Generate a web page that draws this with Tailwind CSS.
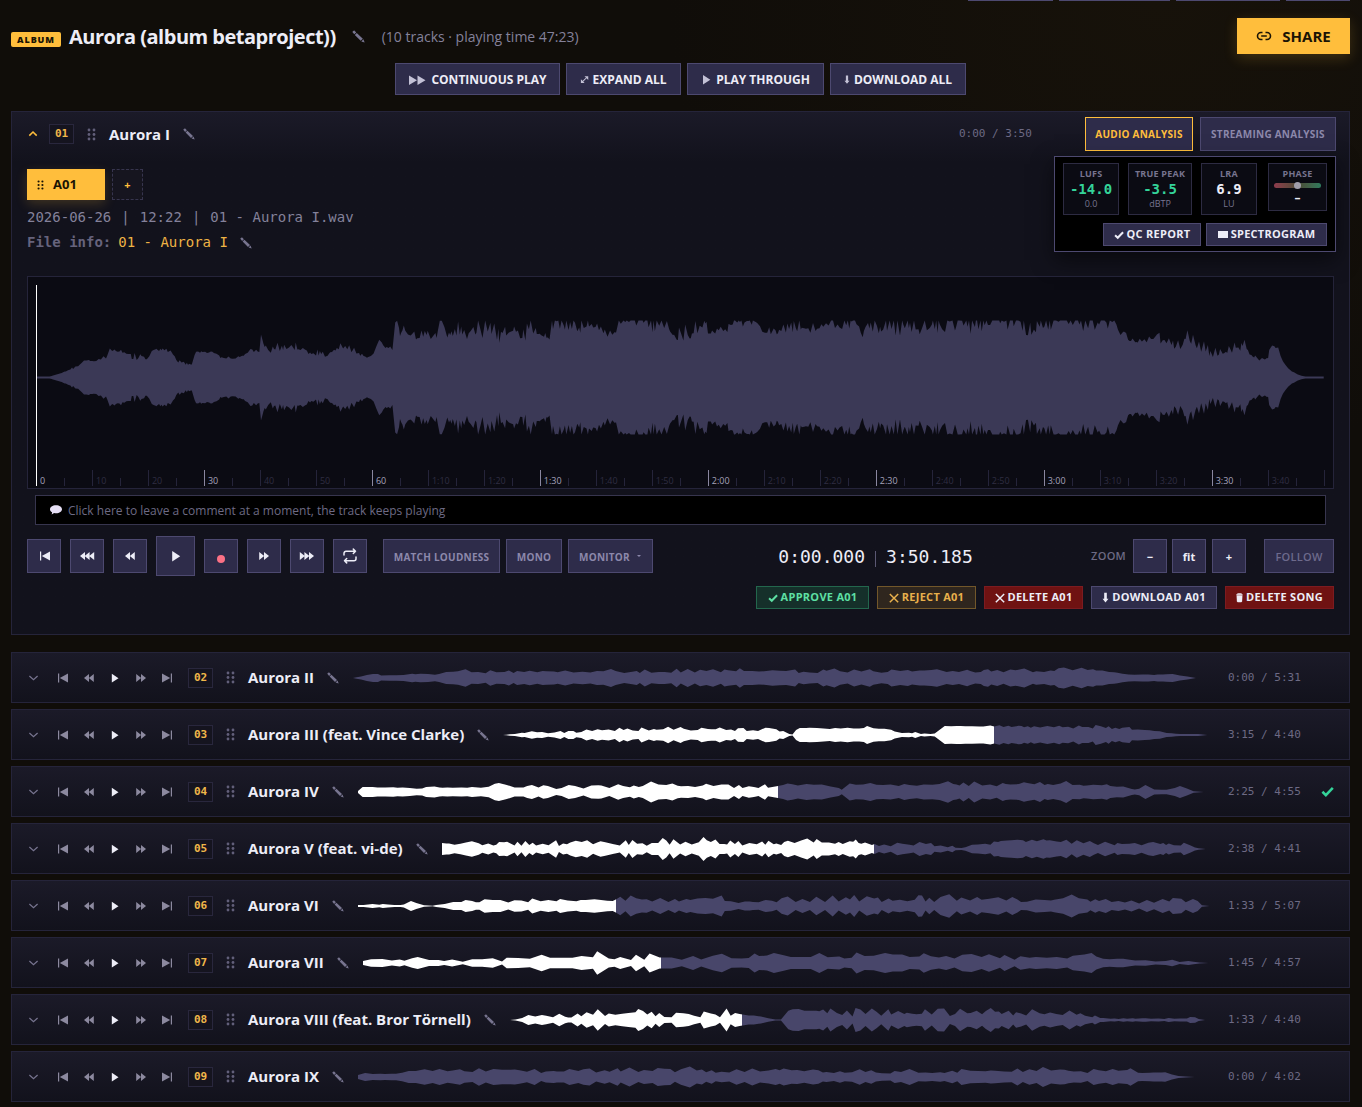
<!DOCTYPE html>
<html lang="en">
<head>
    <meta charset="UTF-8">
    <meta name="viewport" content="width=device-width, initial-scale=1.0">
    <title>Aurora (album betaproject))</title>
    <script src="https://cdn.jsdelivr.net/npm/@tailwindcss/browser@4"></script>
</head>
<body class="min-h-screen bg-[#100d09] bg-[radial-gradient(ellipse_at_85%_0%,#17120a_0%,#100d09_30%)] font-['Open_Sans','Noto_Sans',sans-serif] text-[#ededf7]">

    <!-- Icon sprite -->
    <svg class="hidden" aria-hidden="true">
        <symbol id="i-pencil" viewBox="0 0 12 12">
            <path fill="currentColor" d="M.3 1.8Q1 .3 2.200.4L3.900 2.200 2.100 4zM2.600 4.500 4.400 2.700 10 8 8 10zM10.500 8.600 11.700 11.600 8.600 10.500z" />
        </symbol>
        <symbol id="i-dots" viewBox="0 0 9 13">
            <g fill="currentColor">
                <circle cx="2" cy="2" r="1.400" /><circle cx="7" cy="2" r="1.400" />
                <circle cx="2" cy="6.500" r="1.400" /><circle cx="7" cy="6.500" r="1.400" />
                <circle cx="2" cy="11" r="1.400" /><circle cx="7" cy="11" r="1.400" />
            </g>
        </symbol>
        <symbol id="i-up" viewBox="0 0 12 12">
            <path fill="none" stroke="currentColor" stroke-width="1.500" d="M2.300 7.600 6 4 9.700 7.600" />
        </symbol>
        <symbol id="i-down" viewBox="0 0 12 12">
            <path fill="none" stroke="currentColor" stroke-width="1.200" d="M2.400 4 6.500 7.800 10.600 4" />
        </symbol>
        <symbol id="i-start" viewBox="0 0 12 12">
            <path fill="currentColor" d="M1 1.500h1.200v9H1zM11 1.500v9L2.800 6z" />
        </symbol>
        <symbol id="i-end" viewBox="0 0 12 12">
            <path fill="currentColor" d="M9.800 1.500H11v9H9.800zM1 1.500v9L9.200 6z" />
        </symbol>
        <symbol id="i-rew" viewBox="0 0 12 12">
            <path fill="currentColor" d="M6 2v8L1 6zM10.800 2v8l-5-4z" />
        </symbol>
        <symbol id="i-fwd" viewBox="0 0 12 12">
            <path fill="currentColor" d="M1.200 2v8l5-4zM6 2v8l5-4z" />
        </symbol>
        <symbol id="i-rew3" viewBox="0 0 16 12">
            <path fill="currentColor" d="M6 2v8L1 6zM10.600 2v8l-5-4zM15.200 2v8l-5-4z" />
        </symbol>
        <symbol id="i-fwd3" viewBox="0 0 16 12">
            <path fill="currentColor" d="M.8 2v8l5-4zM5.400 2v8l5-4zM10 2v8l5-4z" />
        </symbol>
        <symbol id="i-play" viewBox="0 0 12 12">
            <path fill="currentColor" d="M2.200 1v10.400l8-5.200z" />
        </symbol>
        <symbol id="i-play2" viewBox="0 0 18 12">
            <path fill="currentColor" d="M1 1.500v9.500l8-4.700zM9.500 1.500v9.500l8-4.700z" />
        </symbol>
        <symbol id="i-expand" viewBox="0 0 12 12">
            <path fill="none" stroke="currentColor" stroke-width="1.400" d="M3 9.300 9.300 3" />
            <path fill="currentColor" d="M6 1.800h5v5zM1.200 5.800v5h5z" />
        </symbol>
        <symbol id="i-arrow" viewBox="0 0 8 12">
            <path fill="currentColor" d="M2.500.6h3V7.500h1.900L4 11.600.6 7.500h1.900z" />
        </symbol>
        <symbol id="i-check" viewBox="0 0 12 12">
            <path fill="none" stroke="currentColor" stroke-width="2.400" d="M1.300 6.200 4.500 9.300 10.900 2.700" />
        </symbol>
        <symbol id="i-cross" viewBox="0 0 12 12">
            <path fill="none" stroke="currentColor" stroke-width="1.800" d="M1 1.200l10 10M11 1.200l-10 10" />
        </symbol>
        <symbol id="i-trash" viewBox="0 0 8 12">
            <path fill="currentColor" d="M.6 2.500C.6.6 7.400.6 7.400 2.500L7 10.500C6.900 11.800 1.100 11.800 1 10.500z" />
            <path fill="none" stroke="#6f1212" stroke-width=".5" d="M1 3.300h6" />
        </symbol>
        <symbol id="i-link" viewBox="0 0 16 10">
            <path fill="none" stroke="currentColor" stroke-width="1.600" d="M6.500 1.500H5a3.300 3.300 0 0 0 0 7h1.500M9.500 1.500H11a3.300 3.300 0 0 1 0 7H9.500M5.200 5h5.600" />
        </symbol>
        <symbol id="i-loop" viewBox="0 0 16 16">
            <path fill="none" stroke="currentColor" stroke-width="1.500" stroke-linecap="round" stroke-linejoin="round" d="M2 7V5.300a2 2 0 0 1 2-2h9.500M11.300 1.100l2.200 2.200-2.200 2.200M14 9v1.700a2 2 0 0 1-2 2H2.500M4.700 10.500l-2.200 2.200 2.200 2.200" />
        </symbol>
        <symbol id="i-bubble" viewBox="0 0 14 12">
            <path fill="currentColor" d="M7 1.200c3.600 0 6 1.700 6 4S10.600 9.200 7 9.200c-.7 0-1.300 0-1.900-.2L2.700 10.600l.4-2.300C1.700 7.500 1 6.400 1 5.200c0-2.300 2.400-4 6-4z" />
        </symbol>
    </svg>

    <div class="pr-3 pl-[11px]">
        <!-- Toolbar, scrolled almost out of view -->
        <div class="flex h-px justify-end gap-[6px]">
            <div class="w-[85px] bg-[#4d4970]"></div>
            <div class="w-[111px] bg-[#4d4970]"></div>
            <div class="w-[104px] bg-[#4d4970]"></div>
            <div class="w-[64px] bg-[#4d4970]"></div>
        </div>

        <header class="mt-[17px] flex h-9 items-center">
            <span class="mt-[7px] flex h-[15px] w-[50px] items-center justify-center rounded-xs bg-[#ffbe3c] text-[9px] font-extrabold tracking-widest text-[#1a1405]">ALBUM</span>
            <h1 class="mt-[2px] ml-2 text-xl font-bold tracking-tight whitespace-nowrap">Aurora (album betaproject))</h1>
            <button type="button" aria-label="Rename album" class="ml-4 text-[#77748f]"><svg class="size-[13px]"><use href="#i-pencil" /></svg></button>
            <span class="mt-[2px] ml-[17px] text-sm text-[#84819a]">(10 tracks · playing time 47:23)</span>
            <button type="button" class="ml-auto flex h-9 w-[113px] items-center justify-center gap-[10px] bg-[#ffbe3c] text-[15px] font-bold text-[#1a1405] shadow-[0_4px_14px_#ffbe3c30]">
                <svg class="h-[10px] w-4"><use href="#i-link" /></svg>SHARE
            </button>
        </header>

        <div class="mt-[9px] flex justify-center gap-[6px] text-xs font-bold">
            <button type="button" class="flex h-8 w-[165px] items-center justify-center gap-[5px] border border-[#4d4970] bg-[#2e2c4a] pt-px"><svg class="h-3 w-[18px] text-[#c3c1d6]"><use href="#i-play2" /></svg>CONTINUOUS PLAY</button>
            <button type="button" class="flex h-8 w-[115px] items-center justify-center gap-[3px] border border-[#4d4970] bg-[#2e2c4a] pt-px"><svg class="size-[9px] text-[#c3c1d6]"><use href="#i-expand" /></svg>EXPAND ALL</button>
            <button type="button" class="flex h-8 w-[137px] items-center justify-center gap-1 border border-[#4d4970] bg-[#2e2c4a] pt-px"><svg class="size-[11px] text-[#c3c1d6]"><use href="#i-play" /></svg>PLAY THROUGH</button>
            <button type="button" class="flex h-8 w-[136px] items-center justify-center gap-1 border border-[#4d4970] bg-[#2e2c4a] pt-px"><svg class="h-[9px] w-[6px] text-[#c3c1d6]"><use href="#i-arrow" /></svg>DOWNLOAD ALL</button>
        </div>

        <!-- Open track -->
        <section class="mt-4 border border-[#25243a] bg-[#12121c] bg-linear-to-b from-[#1b1a28] to-[#12121c] to-[50px] px-[15px] pb-[25px]">
            <div class="relative flex h-11 items-center">
                <button type="button" aria-label="Collapse" class="text-[#ffbe3c]"><svg class="size-3"><use href="#i-up" /></svg></button>
                <span class="ml-[10px] flex h-5 w-[25px] items-center justify-center border border-[#29273d] bg-[#15141f] pt-px font-['DejaVu_Sans_Mono',monospace] text-[11px] font-bold text-[#f0b74a]">01</span>
                <svg class="ml-[13px] h-[13px] w-[9px] text-[#625f7a]"><use href="#i-dots" /></svg>
                <h2 class="ml-[13px] text-[15px] font-bold">Aurora I</h2>
                <button type="button" aria-label="Rename track" class="ml-[13px] text-[#77748f]"><svg class="size-3"><use href="#i-pencil" /></svg></button>
                <span class="mt-px ml-auto w-[76px] font-['DejaVu_Sans_Mono',monospace] text-[11px] text-[#6d6a84]">0:00 / 3:50</span>
                <div class="-mr-[2px] ml-[50px] flex gap-[7px] text-[10px] font-bold tracking-wide">
                    <button type="button" class="h-[34px] w-[108px] border border-[#ffbe3c] bg-[#2e2c4a] text-[#ffbe3c]">AUDIO ANALYSIS</button>
                    <button type="button" class="h-[34px] w-[136px] border border-[#4d4970] bg-[#2e2c4a] text-[#8c88ab]">STREAMING ANALYSIS</button>
                </div>

                <!-- Analysis popover -->
                <div class="absolute top-11 -right-[2px] h-24 w-[282px] border border-[#4d4970] bg-black px-2 pt-[6px] shadow-[0_8px_20px_#00000080]">
                    <div class="flex items-start justify-between text-center text-[9px] leading-[14px] text-[#77748f]">
                        <div class="h-[52px] w-14 border border-[#2d2b42] bg-[#0b0b13] pt-[3px]">
                            <div class="font-bold tracking-wide">LUFS</div>
                            <div class="font-['DejaVu_Sans_Mono',monospace] text-sm leading-4 font-bold text-[#34d399]">-14.0</div>
                            <div>0.0</div>
                        </div>
                        <div class="h-[52px] w-16 border border-[#2d2b42] bg-[#0b0b13] pt-[3px] whitespace-nowrap">
                            <div class="font-bold tracking-wide">TRUE PEAK</div>
                            <div class="font-['DejaVu_Sans_Mono',monospace] text-sm leading-4 font-bold text-[#34d399]">-3.5</div>
                            <div>dBTP</div>
                        </div>
                        <div class="h-[52px] w-14 border border-[#2d2b42] bg-[#0b0b13] pt-[3px]">
                            <div class="font-bold tracking-wide">LRA</div>
                            <div class="font-['DejaVu_Sans_Mono',monospace] text-sm leading-4 font-bold text-[#ededf7]">6.9</div>
                            <div>LU</div>
                        </div>
                        <div class="ml-[2px] h-12 w-[59px] border border-[#2d2b42] bg-[#0b0b13] px-[5px] pt-[3px]">
                            <div class="font-bold tracking-wide">PHASE</div>
                            <div class="mt-[2px] flex h-[5px] items-center justify-center rounded-full bg-linear-to-r from-[#8f3b4d] via-[#4a4a35] to-[#2c7a5c]">
                                <span class="size-[7px] rounded-full bg-[#a09eab]"></span>
                            </div>
                            <div class="mt-[3px] text-xs leading-[14px] font-bold text-[#ededf7]">–</div>
                        </div>
                    </div>
                    <div class="mt-2 flex justify-end gap-[5px] text-[11px] font-bold tracking-wide">
                        <button type="button" class="flex h-[23px] w-[98px] items-center justify-center gap-[3px] border border-[#4d4970] bg-[#2e2c4a]"><svg class="size-[10px]"><use href="#i-check" /></svg>QC REPORT</button>
                        <button type="button" class="flex h-[23px] w-[121px] items-center justify-center gap-[3px] border border-[#4d4970] bg-[#2e2c4a]"><span class="h-[7px] w-[10px] bg-[#ededf7]"></span>SPECTROGRAM</button>
                    </div>
                </div>
            </div>

            <div class="mt-[13px] flex gap-[7px]">
                <button type="button" class="flex h-[31px] w-[78px] items-center gap-[9px] bg-[#ffbe3c] pl-[10px] text-[13px] font-bold text-[#1a1405] shadow-[0_4px_12px_#ffbe3c30]"><svg class="h-[10px] w-[7px]"><use href="#i-dots" /></svg>A01</button>
                <button type="button" class="h-[31px] w-[31px] border border-dashed border-[#37354e] bg-[#16151f] pt-[2px] text-[11px] font-bold text-[#ffbe3c]">+</button>
            </div>

            <div class="mt-[5px] font-['DejaVu_Sans_Mono',monospace] text-sm leading-[25px] text-[#84819a]">
                <p class="flex gap-[10px]"><span>2026-06-26</span><span>|</span><span>12:22</span><span>|</span><span>01 - Aurora I.wav</span></p>
                <p class="flex items-center gap-[7px]"><b class="text-[#66637c]">File info:</b><span class="text-[#eeb345]">01 - Aurora I</span>
                    <button type="button" aria-label="Rename file" class="ml-[5px] text-[#77748f]"><svg class="size-3"><use href="#i-pencil" /></svg></button>
                </p>
            </div>

            <div class="mt-[21px] border border-[#25243a] bg-[#0b0b13] px-2 pt-2 pb-[2px]">
                <div class="border-l border-white">
                    <svg id="main-wave" class="block h-[185px] w-full" preserveAspectRatio="none"></svg>
                    <div id="ruler" class="-ml-px flex h-4 text-[9px] leading-4"></div>
                </div>
            </div>

            <label class="mx-2 mt-[6px] flex h-[30px] items-center gap-[5px] border border-[#37354e] bg-black pl-[13px]">
                <svg class="h-3 w-[14px] text-[#e6dff5]"><use href="#i-bubble" /></svg>
                <input type="text" aria-label="Comment" placeholder="Click here to leave a comment at a moment, the track keeps playing" class="flex-1 pt-px text-xs outline-none placeholder:text-[#6d6a84]">
            </label>

            <div class="mt-[11px] flex h-10 items-center">
                <div class="flex items-center gap-[9px]">
                    <button type="button" aria-label="To start" class="flex size-[34px] items-center justify-center border border-[#4d4970] bg-[#2e2c4a] pl-px"><svg class="size-3"><use href="#i-start" /></svg></button>
                    <button type="button" aria-label="Back 30 s" class="flex size-[34px] items-center justify-center border border-[#4d4970] bg-[#2e2c4a]"><svg class="h-3 w-4"><use href="#i-rew3" /></svg></button>
                    <button type="button" aria-label="Back 10 s" class="flex size-[34px] items-center justify-center border border-[#4d4970] bg-[#2e2c4a]"><svg class="size-3"><use href="#i-rew" /></svg></button>
                    <button type="button" aria-label="Play" class="flex h-10 w-[39px] items-center justify-center border border-[#4d4970] bg-[#2e2c4a]"><svg class="size-3"><use href="#i-play" /></svg></button>
                    <button type="button" aria-label="Record" class="flex size-[34px] items-center justify-center border border-[#4d4970] bg-[#2e2c4a] pt-[5px]"><span class="size-2 rounded-full bg-[#fb7185]"></span></button>
                    <button type="button" aria-label="Forward 10 s" class="flex size-[34px] items-center justify-center border border-[#4d4970] bg-[#2e2c4a]"><svg class="size-3"><use href="#i-fwd" /></svg></button>
                    <button type="button" aria-label="Forward 30 s" class="flex size-[34px] items-center justify-center border border-[#4d4970] bg-[#2e2c4a]"><svg class="h-3 w-4"><use href="#i-fwd3" /></svg></button>
                    <button type="button" aria-label="Loop" class="flex size-[34px] items-center justify-center border border-[#4d4970] bg-[#2e2c4a]"><svg class="size-4"><use href="#i-loop" /></svg></button>
                </div>
                <div class="ml-4 flex gap-[6px] text-[10px] font-bold tracking-wide text-[#8c88ab]">
                    <button type="button" class="h-[34px] w-[117px] border border-[#4d4970] bg-[#2e2c4a] pt-[2px]">MATCH LOUDNESS</button>
                    <button type="button" class="h-[34px] w-14 border border-[#4d4970] bg-[#2e2c4a] pt-[2px]">MONO</button>
                    <div class="relative">
                        <select aria-label="Monitor" class="h-[34px] w-[85px] appearance-none border border-[#4d4970] bg-[#2e2c4a] pt-[2px] pl-[10px] tracking-wide">
                            <option>MONITOR</option>
                        </select>
                        <svg class="pointer-events-none absolute top-4 right-3 h-[2px] w-1" viewBox="0 0 4 2"><path fill="currentColor" d="M0 0h4L2 2z" /></svg>
                    </div>
                </div>
                <div class="flex flex-1 items-center justify-center gap-[10px] pt-px pl-[7px] font-['DejaVu_Sans_Mono',monospace] text-lg">
                    <span>0:00.000</span><span class="mt-1 h-4 w-px bg-[#5b5873]"></span><span>3:50.185</span>
                </div>
                <div class="flex items-center text-[11px] font-bold">
                    <span class="mr-[7px] font-semibold tracking-wide text-[#6d6a84]">ZOOM</span>
                    <button type="button" class="h-[34px] w-[34px] border border-[#4d4970] bg-[#2e2c4a] pt-[2px]">−</button>
                    <button type="button" class="ml-[5px] h-[34px] w-[34px] border border-[#4d4970] bg-[#2e2c4a] pt-[2px]">fit</button>
                    <button type="button" class="ml-[6px] h-[34px] w-[34px] border border-[#4d4970] bg-[#2e2c4a] pt-[2px]">+</button>
                    <button type="button" class="ml-[18px] h-[34px] w-[70px] border border-[#4d4970] bg-[#2e2c4a] pt-[2px] font-semibold tracking-wide text-[#6d6a8c]">FOLLOW</button>
                </div>
            </div>

            <div class="mt-[10px] flex justify-end gap-2 text-[11px] font-bold tracking-wide">
                <button type="button" class="flex h-[23px] w-[113px] items-center justify-center gap-[3px] border border-[#23674d] bg-[#15302a] text-[#5ee0a4]"><svg class="size-[10px]"><use href="#i-check" /></svg>APPROVE A01</button>
                <button type="button" class="flex h-[23px] w-[99px] items-center justify-center gap-[3px] border border-[#72572a] bg-[#2f261e] text-[#e8b04c]"><svg class="size-[10px]"><use href="#i-cross" /></svg>REJECT A01</button>
                <button type="button" class="flex h-[23px] w-[99px] items-center justify-center gap-[3px] border border-[#7d1b20] bg-[#6f1212]"><svg class="size-[10px]"><use href="#i-cross" /></svg>DELETE A01</button>
                <button type="button" class="flex h-[23px] w-[126px] items-center justify-center gap-[3px] border border-[#4d4970] bg-[#2e2c4a]"><svg class="h-[11px] w-[7px]"><use href="#i-arrow" /></svg>DOWNLOAD A01</button>
                <button type="button" class="flex h-[23px] w-[109px] items-center justify-center gap-[3px] border border-[#7d1b20] bg-[#6f1212]"><svg class="h-[11px] w-[7px]"><use href="#i-trash" /></svg>DELETE SONG</button>
            </div>
        </section>

        <!-- Collapsed tracks -->
        <div id="tracks" class="mt-[17px] flex flex-col gap-[6px] pb-1"></div>
    </div>

<script>
// Peaks are stored as [position, quietest, loudest]; detail between them is filled in from a seed
const mainPeaks = [
    [37,1,1],[50,1,1],[60,4,4],[72,8,10],[78,11,12],[84,17,17],[93,16,18],[100,17,23],[106,18,24],[110,26,31],[115,25,28],
    [125,24,29],[133,17,24],[135,17,28],[138,17,20],[142,20,29],[147,17,19],[153,27,29],[163,26,30],[172,22,27],[178,15,19],[186,12,15],[193,13,13],
    [195,25,26],[216,23,26],[222,18,22],[240,19,23],[250,26,30],[260,24,28],[261,43,43],[264,31,33],[270,22,31],[285,25,38],
    [297,28,38],[306,26,30],[313,19,25],[320,20,32],[331,21,27],[341,30,37],[351,24,34],[358,20,27],[372,19,22],[376,29,32],
    [380,38,42],[384,28,32],[390,30,32],[393,26,27],[394,52,57],[398,57,57],[400,40,44],[404,50,56],[408,38,44],[420,38,56],[437,38,44],
    [439,56,57],[443,57,57],[446,38,58],[456,36,66],[486,40,68],[492,34,58],[510,36,54],[525,36,54],[530,40,62],[538,42,46],
    [550,36,44],[552,46,64],[600,44,64],[606,40,47],[615,40,50],[618,50,68],[660,44,64],[680,36,58],[700,42,64],[715,44,68],
    [722,44,52],[728,42,56],[732,50,66],[756,52,66],[762,44,56],[784,42,54],[792,46,64],[795,38,58],[800,44,64],[830,46,68],
    [855,50,66],[862,38,52],[870,42,62],[900,42,66],[930,44,68],[950,46,70],[975,42,74],[990,42,66],[995,50,74],[1020,46,74],
    [1030,38,62],[1050,44,70],[1075,48,74],[1090,42,72],[1115,48,74],[1118,46,50],[1125,36,48],[1135,34,38],[1150,33,44],
    [1165,32,48],[1175,25,36],[1184,30,46],[1197,26,42],[1205,22,36],[1215,20,36],[1225,20,32],[1234,26,36],[1240,24,34],
    [1244,33,40],[1250,22,24],[1258,17,23],[1268,18,22],[1270,30,34],[1278,27,37],[1284,14,15],[1290,7,8],[1298,3,3],[1304,1,1],[1325,1,1]
];

const tracks = [
    { no: '02', name: 'Aurora II', time: '0:00 / 5:31', start: 354, played: 0, step: 6, peaks: [[354,0,0],[364,2,2],[375,4,5],[382,2,3],[405,3,4],[425,4,5],[440,3,4],[449,6,8],[465,4,9],[500,5,9],[820,5,10],[1095,6,10],[1112,5,7],[1130,3,5],[1180,2,4],[1196,0,0],[1210,0,0]] },
    { no: '03', name: 'Aurora III (feat. Vince Clarke)', time: '3:15 / 4:40', start: 502, played: 994, step: 5, peaks: [[502,0,0],[512,1,1],[527,1,4],[531,2,4],[545,1,3],[565,1,5],[590,4,8],[690,4,9],[770,4,9],[784,2,4],[792,0,1],[797,7,7],[890,4,9],[897,2,3],[936,0,4],[942,9,9],[994,8,10],[1100,6,10],[1130,4,9],[1155,3,6],[1178,1,1],[1198,1,1],[1209,0,0]] },
    { no: '04', name: 'Aurora IV', time: '2:25 / 4:55', start: 359, played: 778, step: 6, approved: true, peaks: [[359,1,1],[363,5,5],[395,4,5],[425,3,5],[431,8,8],[437,4,5],[480,4,6],[495,4,8],[501,10,10],[508,4,7],[560,3,10],[600,4,11],[778,4,9],[780,7,10],[830,5,9],[843,2,3],[850,6,9],[1050,5,12],[1100,5,11],[1125,4,6],[1137,2,2],[1145,7,7],[1157,1,2],[1172,3,3],[1182,7,7],[1190,1,1],[1202,0,0],[1210,0,0]] },
    { no: '05', name: 'Aurora V (feat. vi-de)', time: '2:38 / 4:41', start: 444, played: 875, step: 5, peaks: [[444,6,6],[455,4,6],[463,4,6],[472,8,8],[485,3,7],[540,3,9],[600,3,11],[875,4,11],[880,3,7],[925,2,8],[935,1,4],[965,1,3],[974,3,6],[990,4,7],[1003,8,10],[1100,4,11],[1150,3,10],[1190,3,7],[1193,1,2],[1203,0,0],[1210,0,0]] },
    { no: '06', name: 'Aurora VI', time: '1:33 / 5:07', start: 359, played: 617, step: 6, peaks: [[359,1,1],[371,1,2],[390,0,4],[407,1,2],[412,5,5],[422,1,1],[436,0,1],[447,2,4],[470,3,7],[500,3,8],[617,5,9],[622,5,12],[730,3,11],[765,3,6],[780,4,12],[1020,4,12],[1060,5,7],[1073,12,12],[1082,5,7],[1110,2,7],[1190,3,9],[1198,5,5],[1201,1,1],[1204,0,0],[1210,0,0]] },
    { no: '07', name: 'Aurora VII', time: '1:45 / 4:57', start: 363, played: 661, step: 8, peaks: [[363,2,2],[367,4,5],[415,1,5],[421,9,9],[430,2,3],[480,1,8],[520,2,9],[600,2,11],[661,3,11],[700,3,12],[880,3,12],[980,3,11],[1080,4,11],[1090,11,11],[1100,3,5],[1115,3,6],[1160,1,4],[1194,1,4],[1203,0,0],[1210,0,0]] },
    { no: '08', name: 'Aurora VIII (feat. Bror Törnell)', time: '1:33 / 4:40', start: 510, played: 742, step: 5, peaks: [[510,0,0],[520,1,1],[530,3,6],[570,2,8],[600,2,12],[742,3,12],[750,5,6],[765,2,3],[778,0,0],[784,1,1],[789,11,11],[850,3,12],[1075,4,12],[1082,3,6],[1100,1,4],[1115,1,2],[1187,1,2],[1192,4,4],[1201,0,0],[1210,0,0]] },
    { no: '09', name: 'Aurora IX', time: '0:00 / 4:02', start: 359, played: 0, step: 6, peaks: [[359,2,2],[362,5,5],[370,3,3],[398,3,4],[412,4,7],[450,4,10],[870,4,10],[888,3,3],[895,4,9],[1130,4,10],[1165,4,5],[1177,1,1],[1197,0,0],[1210,0,0]] }
];

function wavePath(peaks, step, seed, limit) {
    const rand = () => (seed = (seed * 16807) % 2147483647) / 2147483647;
    const end = peaks[peaks.length - 1][0];
    const top = [];
    let high = false;
    let i = 0;
    let swell = 0.5;
    for (let x = peaks[0][0]; x <= end; x += step * (0.5 + rand())) {
        while (i < peaks.length - 2 && peaks[i + 1][0] <= x) i++;
        const a = peaks[i], b = peaks[i + 1];
        const t = Math.min(1, (x - a[0]) / (b[0] - a[0]));
        const lo = a[1] + (b[1] - a[1]) * t;
        const hi = a[2] + (b[2] - a[2]) * t;
        swell = swell * 0.6 + rand() * 0.4;
        const level = (high ? 0.3 + rand() * 0.6 : rand() * 0.4) + (swell - 0.5) * 0.8;
        top.push([x, Math.min(limit, lo + (hi - lo) * Math.max(0, level))]);
        high = rand() < 0.2 ? high : !high;
    }
    const upper = top.map(([x, h]) => `${x.toFixed(1)} ${(-h).toFixed(1)}`);
    const lower = top.reverse().map(([x, h]) => `${x.toFixed(1)} ${h.toFixed(1)}`);
    return `M${upper.join('L')}L${lower.join('L')}Z`;
}

const mainWave = document.getElementById('main-wave');
mainWave.setAttribute('viewBox', '37 -92.5 1288 185');
mainWave.innerHTML = `<path fill="#3b3956" d="${wavePath(mainPeaks, 1.9, 4211, 57)}" />`;

// Time ruler, one cell for each ten seconds
const duration = 230.185;
let cells = '';
for (let s = 0; s < 230; s += 10) {
    const text = s <= 60 ? s : `${Math.floor(s / 60)}:${String(s % 60).padStart(2, '0')}`;
    const tone = s === 0 ? 'border-white text-[#a5a2bb]' : s % 30 === 0 ? 'border-[#8a87a0] text-[#a5a2bb]' : 'border-[#25243a] text-[#2f2d42]';
    cells += `<div class="flex shrink-0 items-end" style="width:${1000 / duration}%">
        <span class="h-4 w-1/2 border-l pt-[3px] pl-[3px] ${tone}">${text}</span>
        <span class="h-2 w-1/2 border-l border-[#25243a]"></span>
    </div>`;
}
document.getElementById('ruler').innerHTML = cells + '<span class="h-4 border-l border-[#25243a]"></span>';

document.getElementById('tracks').innerHTML = tracks.map((t, n) => `
    <article class="flex h-[51px] items-center border border-[#25243a] bg-linear-to-b from-[#1b1a28] to-[#12121c] px-[15px]">
        <button type="button" aria-label="Expand" class="text-[#77748f]"><svg class="size-3"><use href="#i-down" /></svg></button>
        <div class="ml-[11px] flex items-center text-[#8c899f]">
            <button type="button" aria-label="To start" class="flex w-[26px] justify-center"><svg class="size-3"><use href="#i-start" /></svg></button>
            <button type="button" aria-label="Back" class="flex w-[26px] justify-center"><svg class="size-3"><use href="#i-rew" /></svg></button>
            <button type="button" aria-label="Play" class="flex w-[26px] justify-center text-[#ededf7]"><svg class="size-[10px]"><use href="#i-play" /></svg></button>
            <button type="button" aria-label="Forward" class="flex w-[26px] justify-center"><svg class="size-3"><use href="#i-fwd" /></svg></button>
            <button type="button" aria-label="To end" class="flex w-[26px] justify-center"><svg class="size-3"><use href="#i-end" /></svg></button>
        </div>
        <span class="ml-2 flex h-5 w-[25px] items-center justify-center border border-[#29273d] bg-[#15141f] pt-px font-['DejaVu_Sans_Mono',monospace] text-[11px] font-bold text-[#f0b74a]">${t.no}</span>
        <svg class="ml-[13px] h-[13px] w-[9px] text-[#625f7a]"><use href="#i-dots" /></svg>
        <h2 class="ml-[13px] text-[15px] font-bold whitespace-nowrap">${t.name}</h2>
        <button type="button" aria-label="Rename track" class="ml-[13px] text-[#77748f]"><svg class="size-3"><use href="#i-pencil" /></svg></button>
        <svg class="ml-[14px] h-6 min-w-0 flex-1" viewBox="${t.start} -12 ${1210 - t.start} 24" preserveAspectRatio="none">
            <linearGradient id="g${t.no}" gradientUnits="userSpaceOnUse" x1="0" x2="1210">
                <stop offset="${t.played / 1210}" stop-color="#fff" /><stop offset="${t.played / 1210}" stop-color="#48466a" />
            </linearGradient>
            <path fill="url(#g${t.no})" d="${wavePath(t.peaks, t.step, 977 + n * 131, 12)}" />
        </svg>
        <span class="mt-px ml-[18px] w-[76px] font-['DejaVu_Sans_Mono',monospace] text-[11px] whitespace-nowrap text-[#6d6a84]">${t.time}</span>
        <span class="flex w-[30px] justify-end text-[#34d399]">${t.approved ? '<svg class="size-[13px]"><use href="#i-check" /></svg>' : ''}</span>
    </article>`).join('');
</script>
</body>
</html>
